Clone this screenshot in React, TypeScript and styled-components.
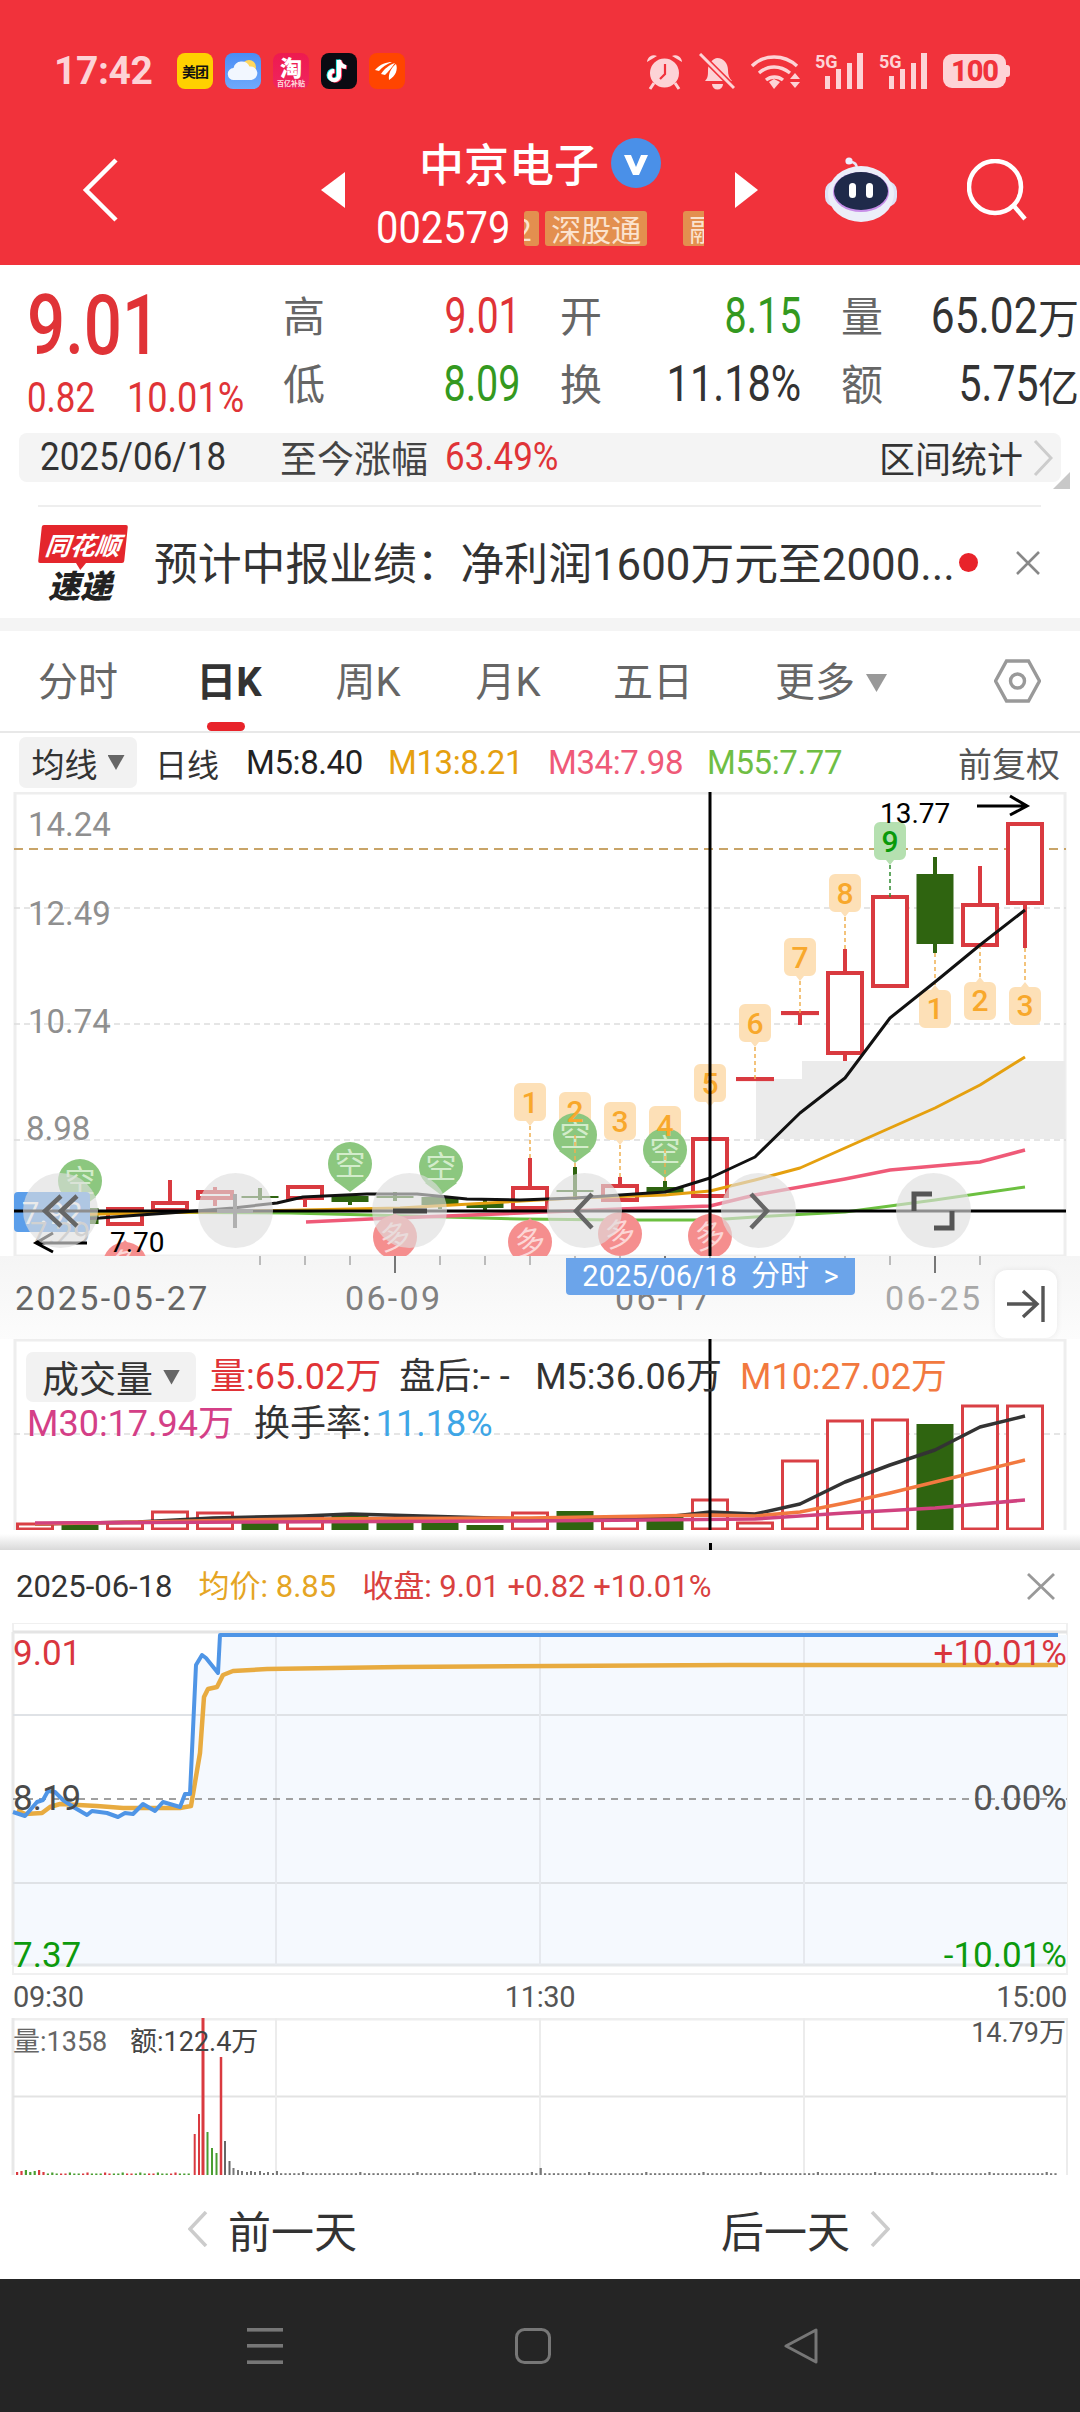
import React from 'react';
import styled, { createGlobalStyle } from 'styled-components';

const SANS = `Roboto, "Noto Sans CJK SC", sans-serif`;
const RED = '#e03337';
const GREEN = '#34991f';
const CANDLE_RED = '#d93a40';
const CANDLE_GREEN = '#2f6410';

const Global = createGlobalStyle`
  html, body { margin: 0; padding: 0; background: #fff; }
  body { font-family: ${SANS}; }
  * { box-sizing: border-box; }
`;

const Page = styled.div`
  width: 1080px; height: 2412px; overflow: hidden; background: #fff;
  display: flex; flex-direction: column; color: #333;
`;

/* The screenshot's numerals are a narrow DIN cut; no such family is installed. */
const Cond = styled.span<{ $x: number; $o?: string }>`
  display: inline-block; white-space: nowrap; transform: scaleX(${p => p.$x}); transform-origin: ${p => p.$o ?? 'left'} center;
`;

/* ---------- red head ---------- */
const RedHead = styled.header`
  height: 265px; background: #f1323b; flex: none; padding-top: 52px;
`;
const StatusRow = styled.div`
  height: 38px; padding-left: 54px; display: flex; align-items: center;
`;
const Clock = styled.span`
  font: 700 39px/38px Roboto, sans-serif; color: #fdd3d6; width: 123px; letter-spacing: -0.4px;
`;
const AppIcons = styled.div`display: flex; gap: 12px;`;
const AppIcon = styled.div<{ $bg: string }>`
  width: 36px; height: 36px; border-radius: 8px; background: ${p => p.$bg}; overflow: hidden;
  display: flex; align-items: center; justify-content: center; flex-direction: column;
`;
const MeituanText = styled.span`
  font: 700 14px/14px "Noto Sans CJK SC", sans-serif; color: #111; white-space: nowrap; letter-spacing: -1px;
`;
const TaoMain = styled.span`
  font: 900 22px/25px "Noto Sans CJK SC", sans-serif; color: #fff;
`;
const TaoSub = styled.span`
  font: 700 7px/9px "Noto Sans CJK SC", sans-serif; color: #ffe0e0; white-space: nowrap;
`;
const StatusIcons = styled.div`
  margin-left: auto; padding-right: 74px; display: flex; align-items: center;
`;
const StatusSvg = styled.svg<{ $ml: number }>`margin-left: ${p => p.$ml}px; display: block;`;
const Battery = styled.div`
  margin-left: 16px; width: 63px; height: 34px; border-radius: 9px; background: #fdd3d6;
  color: #f1323b; font: 800 29px/34px Roboto, sans-serif; text-align: center; position: relative; letter-spacing: -1px;
  &::after { content: ''; position: absolute; right: -4px; top: 11px; width: 4px; height: 12px; background: #fdd3d6; border-radius: 0 3px 3px 0; }
`;
const NavRow = styled.div`
  height: 110px; margin-top: 45px; padding-left: 82px;
  display: grid; grid-template-columns: 239px 24px 390px 90px 142px 58px; align-items: center;
`;
const IconSlot = styled.svg`display: block;`;
const TitleBlock = styled.div`
  height: 110px; display: flex; flex-direction: column; align-items: center; padding-top: 3px;
`;
const TitleLine = styled.div`display: flex; align-items: center; gap: 12px; height: 50px;`;
const TitleText = styled.h1`
  margin: 0; font: 500 45px/50px "Noto Sans CJK SC", sans-serif; color: #fff;
`;
const CodeLine = styled.div`display: flex; align-items: center; gap: 14px; margin-top: 22px; height: 36px;`;
const CodeText = styled(Cond)`
  font: 400 44px/36px Roboto, sans-serif; color: #fff; margin-right: -14px;
`;
const TagStrip = styled.div`
  width: 180px; height: 35px; overflow: hidden; display: flex;
`;
const Tag = styled.span<{ $w: number; $ml?: number; $sliver?: boolean }>`
  flex: none; width: ${p => p.$w}px; margin-left: ${p => p.$ml ?? 0}px; height: 35px; background: #e38f4f; border-radius: 3px;
  color: #fbe3cf; font: 400 30px/35px "Noto Sans CJK SC", sans-serif; white-space: nowrap; overflow: hidden;
  padding: 0 ${p => (p.$sliver ? 0 : 6)}px; text-indent: ${p => (p.$sliver ? -9 : 0)}px;
`;

/* ---------- quote ---------- */
const Quote = styled.section`
  height: 168px; flex: none; display: flex; padding-left: 27px;
`;
const QuoteMain = styled.div`width: 256px; padding-top: 21px;`;
const BigPrice = styled.div`
  font: 500 84px/80px Roboto, sans-serif; color: ${RED};
`;
const Delta = styled.div`
  margin-top: 10px; display: grid; grid-template-columns: 100px auto; font: 400 42px/44px Roboto, sans-serif; color: ${RED};
`;
const StatGrid = styled.div`
  padding-top: 17px; display: grid; grid-template-columns: 237px 241px 238px; grid-auto-rows: 68px; column-gap: 40px;
`;
const Stat = styled.div`display: flex; justify-content: space-between; align-items: center;`;
const StatLabel = styled.span`font: 400 42px/50px "Noto Sans CJK SC", sans-serif; color: #666; margin-bottom: 4px;`;
const StatValue = styled.span<{ $c: string }>`
  display: flex; align-items: center; font: 400 50px/50px Roboto, sans-serif; color: ${p => p.$c}; white-space: nowrap;
`;
const Unit = styled.span`font: 400 41px/50px "Noto Sans CJK SC", sans-serif;`;

const RangeBar = styled.div`
  flex: none; position: relative; margin-left: 19px; width: 1042px; height: 49px; border-radius: 8px; background: #f4f4f4;
  display: grid; grid-template-columns: 240px 165px 1fr auto auto; align-items: center; padding: 0 8px 0 21px;
  &::after { content: ''; position: absolute; right: -9px; bottom: -7px; width: 17px; height: 17px; background: #c8c8c8; clip-path: polygon(100% 0, 100% 100%, 0 100%); }
`;
const RangeNum = styled.span<{ $c: string }>`font: 400 38px/49px Roboto, sans-serif; color: ${p => p.$c};`;
const RangeLabel = styled.span`font: 400 37px/49px "Noto Sans CJK SC", sans-serif; color: #444;`;
const RangeAction = styled.span`font: 400 36px/49px "Noto Sans CJK SC", sans-serif; color: #333; margin-right: 10px;`;

const NewsRow = styled.div`
  flex: none; height: 113px; margin: 23px 39px 0 38px; border-top: 2px solid #eee; display: flex; align-items: center; position: relative;
`;
const Logo = styled.div`width: 89px; display: flex; flex-direction: column; align-items: center; flex: none;`;
const LogoTop = styled.div`
  width: 86px; height: 38px; background: #e4262c; transform: skewX(-6deg); border-radius: 2px; position: relative;
  color: #fff; font: italic 700 25px/38px "Noto Sans CJK SC", sans-serif; text-align: center; white-space: nowrap;
  &::after { content: ''; position: absolute; left: 38px; bottom: -7px; border: 5px solid transparent; border-top: 7px solid #e4262c; border-bottom: 0; }
`;
const LogoBottom = styled.div`
  margin: 5px 0 0 -5px; font: italic 900 32px/32px "Noto Sans CJK SC", sans-serif; color: #222; white-space: nowrap;
`;
const NewsText = styled.div`
  margin: 4px 0 0 27px; font: 400 43.8px/60px ${SANS}; color: #333; white-space: nowrap; width: 807px; overflow: hidden; flex: none;
`;
const RedDot = styled.i`width: 19px; height: 19px; border-radius: 50%; background: #e8232a; flex: none; margin-left: -2px;`;
const NewsClose = styled.svg`margin-left: 38px; flex: none;`;
const Band = styled.div`height: 13px; flex: none; background: #f4f4f4;`;

/* ---------- tabs ---------- */
const TabBar = styled.nav`
  flex: none; height: 102px; border-bottom: 2px solid #e8e8e8; display: grid; padding-bottom: 2px;
  grid-template-columns: 156px 146px 132px 148px 142px 180px 1fr; align-items: center;
`;
const Tab = styled.div<{ $active?: boolean }>`
  position: relative; height: 100px; padding-top: 4px; display: flex; align-items: center; justify-content: center;
  font: ${p => (p.$active ? 700 : 400)} 40px/50px ${SANS}; color: ${p => (p.$active ? '#333' : '#666')};
  ${p => p.$active && `&::after { content: ''; position: absolute; left: 51px; bottom: 0; width: 38px; height: 9px; border-radius: 5px; background: #e8232a; }`}
`;
const MoreTab = styled(Tab)`justify-content: flex-start; padding-left: 51px;`;
const TabCaret = styled.i`
  margin-left: 11px; width: 21px; height: 18px; background: #999; clip-path: polygon(0 0, 100% 0, 50% 100%);
`;
const Hex = styled.svg`justify-self: end; margin-right: 39px;`;

const MaRow = styled.div`
  flex: none; height: 59px; padding: 0 20px 0 19px; display: grid; align-items: center;
  grid-template-columns: 136px 91px 142px 160px 159px 1fr auto;
`;
const Chip = styled.div<{ $w: number; $h: number }>`
  width: ${p => p.$w}px; height: ${p => p.$h}px; background: #f2f2f2; border-radius: 7px;
  display: flex; align-items: center; justify-content: center; gap: 10px;
`;
const ChipText = styled.span<{ $s: number; $c?: string }>`
  font: 400 ${p => p.$s}px/40px "Noto Sans CJK SC", sans-serif; color: ${p => p.$c ?? '#333'};
`;
const ChipCaret = styled.i`width: 17px; height: 15px; background: #666; clip-path: polygon(0 0, 100% 0, 50% 100%);`;
const MaItem = styled.span<{ $c: string }>`
  font: 400 33px/40px ${SANS}; color: ${p => p.$c}; white-space: nowrap; letter-spacing: -.4px;
`;

/* ---------- charts ---------- */
const ChartWrap = styled.div`position: relative; flex: none; width: 1080px;`;
const ChartSvg = styled.svg`display: block;`;
const Axis = styled.text<{ $c?: string; $s?: number; $w?: number }>`
  font-family: ${SANS}; font-size: ${p => p.$s ?? 33}px; fill: ${p => p.$c ?? '#8f8f8f'}; font-weight: ${p => p.$w ?? 400};
`;
const MarkerGlyph = styled.text<{ $c: string; $s: number }>`
  font-family: "Noto Sans CJK SC", sans-serif; font-size: ${p => p.$s}px; fill: ${p => p.$c}; text-anchor: middle;
`;
const NavOverlay = styled.div`
  position: absolute; left: 23px; top: 381px; display: flex; gap: 99.5px;
`;
const NavBtn = styled.div`
  width: 75px; height: 75px; border-radius: 50%; background: rgba(222,222,222,.64);
  display: flex; align-items: center; justify-content: center;
`;

const DateAxis = styled.div`
  flex: none; height: 83px; position: relative; background: linear-gradient(#f5f5f5, #fcfcfc);
`;
const TickSvg = styled.svg`display: block;`;
const DateRow = styled.div`
  padding-left: 15px; display: grid; grid-template-columns: 330px 270px 270px 1fr; margin-top: 5px;
`;
const DateLabel = styled.span<{ $c: string }>`
  font: 400 34px/40px ${SANS}; letter-spacing: 2.3px; color: ${p => p.$c}; white-space: nowrap;
`;
const DateFlag = styled.div`
  position: absolute; left: 566px; top: 2px; width: 289px; height: 37px; background: #6ba4ea; border-radius: 0 0 4px 4px;
  color: #fff; font: 400 29px/37px ${SANS}; text-align: center; white-space: pre;
`;
const JumpEnd = styled.div`
  position: absolute; left: 995px; top: 14px; width: 62px; height: 68px; background: #fff; border-radius: 12px;
  box-shadow: 0 0 6px rgba(0,0,0,.08); display: flex; align-items: center; justify-content: center;
`;

const VolLegend = styled.div`
  position: absolute; left: 26px; top: 13px; width: 1040px;
`;
const VolLine = styled.div<{ $h: number }>`
  display: flex; align-items: center; height: ${p => p.$h}px; white-space: nowrap;
`;
const VolItem = styled.span<{ $c: string; $ml?: number; $w?: number }>`
  font: 400 36px/44px ${SANS}; color: ${p => p.$c}; margin-left: ${p => p.$ml ?? 0}px;
  ${p => p.$w && `width: ${p.$w}px;`}
`;
const WideDash = styled.span`letter-spacing: 10px;`;

const Shade = styled.div`
  flex: none; height: 20px; position: relative; background: linear-gradient(#fff 20%, #ececec 60%, #d9d9d9 100%);
  &::after { content: ''; position: absolute; left: 709px; top: 13px; width: 3px; height: 7px; background: #000; }
`;

/* ---------- sheet ---------- */
const SheetHead = styled.div`
  flex: none; height: 73px; padding: 0 25px 0 16px; display: flex; align-items: center; white-space: nowrap;
`;
const SheetText = styled.span<{ $c: string; $ml?: number }>`
  font: 400 31px/40px ${SANS}; color: ${p => p.$c}; margin-left: ${p => p.$ml ?? 0}px;
`;
const SheetClose = styled.svg`margin-left: auto;`;
const TimeAxis = styled.div`
  flex: none; height: 43px; padding: 0 13px; display: flex; justify-content: space-between; align-items: center;
  font: 400 29px/36px ${SANS}; color: #555; letter-spacing: -.3px;
`;
const Footer = styled.div`flex: none; height: 99px; display: flex; padding: 0 8px 2px 6px;`;
const FootBtn = styled.div`
  flex: 1; display: flex; align-items: center; justify-content: center; gap: 20px;
  font: 400 43px/50px "Noto Sans CJK SC", sans-serif; color: #333;
`;
const SysBar = styled.footer`
  flex: 1; background: #252525; display: flex; align-items: center; padding-left: 247px; gap: 232px;
`;

/* ---------- data ---------- */
const cx = (i: number) => 35 + 45 * i;
type Candle = { t: number; b: number; wt?: number; wb?: number; g?: boolean };
const candles: Candle[] = [
  { t: 1209, b: 1215, g: false }, { t: 1208, b: 1224, g: true }, { t: 1209, b: 1224, wt: 1207 }, { t: 1203, b: 1210, wt: 1180 },
  { t: 1192, b: 1198, wt: 1187, wb: 1206 }, { t: 1196, b: 1198, wt: 1188, wb: 1200, g: true }, { t: 1187, b: 1198, wb: 1207 },
  { t: 1196, b: 1202, wb: 1205, g: true }, { t: 1196, b: 1198, wt: 1192, wb: 1201, g: true }, { t: 1197, b: 1205, wb: 1209, g: true },
  { t: 1203, b: 1208, wt: 1200, wb: 1211, g: true }, { t: 1188, b: 1208, wt: 1158 }, { t: 1190, b: 1192, wt: 1167, wb: 1200, g: true },
  { t: 1186, b: 1200, wt: 1177 }, { t: 1187, b: 1193, wt: 1181, g: true }, { t: 1139, b: 1196 }, { t: 1079, b: 1079.1 },
  { t: 1013, b: 1013.1, wb: 1025 }, { t: 973, b: 1053, wt: 949, wb: 1061 }, { t: 897, b: 986 }, { t: 874, b: 944, wt: 857, wb: 953, g: true },
  { t: 905, b: 945, wt: 866 }, { t: 824, b: 903, wb: 948 },
];
const pts = (a: number[][]) => a.map(p => p.join(',')).join(' ');
const ma5 = [[40,1221],[100,1218],[140,1215],[183,1212],[233,1208],[277,1203],[303,1197],[367,1194],[417,1194],[467,1199],[520,1200],[575,1198],[620,1195],[665,1192],[710,1178],[755,1157],[800,1113],[845,1078],[890,1018],[935,982],[980,945],[1025,910]];
const ma13 = [[40,1216],[100,1214],[250,1211],[400,1208],[575,1198],[665,1195],[710,1191],[755,1180],[800,1168],[845,1148],[890,1128],[935,1108],[980,1085],[1025,1057]];
const ma34 = [[306,1222],[370,1219],[520,1213],[620,1209],[710,1206],[755,1195],[845,1179],[890,1170],[980,1162],[1025,1150]];
const ma55 = [[60,1212],[290,1213],[370,1215],[520,1219],[620,1220],[710,1220],[755,1217],[845,1212],[935,1200],[1025,1187]];

const topTags: [number, number, string, boolean?][] = [
  [11, 1083, '1'], [12, 1092, '2'], [13, 1102, '3'], [14, 1106, '4'], [15, 1064, '5'], [16, 1004, '6'], [17, 938, '7'], [18, 874, '8'], [19, 822, '9', true],
];
const topTagEnds = [1158, 1167, 1177, 1181, 1139, 1079, 1013, 949, 897];
const bottomTags: [number, number, string, number][] = [
  [20, 985, '1', 953], [21, 977, '2', 945], [22, 982, '3', 948],
];
const kong: [number, number][] = [[80, 1159], [350, 1142], [441, 1145], [575, 1113], [665, 1128]];
const duo: [number, number][] = [[125, 1240], [395, 1213], [530, 1218], [620, 1210], [710, 1212]];

const volBars: [number, boolean][] = [
  [1524, false], [1525, true], [1523, false], [1512, false], [1513, false], [1521, true], [1517, false], [1516, true], [1517, true], [1518, true], [1525, true],
  [1513, false], [1511, true], [1519, false], [1517, true], [1500, false], [1523, false], [1461, false], [1421, false], [1420, false], [1424, true], [1406, false], [1406, false],
];
const volBlack = [[35,1524],[138,1522],[213,1518],[303,1516],[351,1514],[530,1519],[665,1517],[710,1512],[755,1514],[800,1504],[845,1482],[890,1465],[935,1450],[980,1427],[1025,1416]];
const volOrange = [[35,1524],[300,1519],[530,1518],[710,1515],[755,1516],[800,1512],[845,1503],[890,1493],[935,1482],[1025,1460]];
const volPink = [[35,1523],[530,1521],[755,1519],[845,1513],[935,1508],[1025,1500]];

const blueLine = [[13,1812],[25,1816],[37,1802],[43,1800],[48,1791],[55,1792],[63,1800],[75,1808],[87,1815],[92,1811],[107,1813],[118,1817],[125,1813],[133,1814],[143,1804],[155,1811],[163,1802],[180,1807],[185,1794],[190,1794],[196,1665],[202,1655],[206,1658],[218,1673],[220,1635],[1058,1635]];
const avgLine = [[17,1810],[25,1814],[42,1813],[50,1807],[60,1804],[97,1806],[123,1808],[180,1808],[191,1806],[200,1753],[204,1697],[208,1689],[217,1687],[223,1675],[233,1671],[267,1669],[400,1667],[730,1665],[1058,1665]];

const specials: [number, number, string, number][] = [
  [194.7, 2134, '#d93a40', 2], [199, 2114, '#d93a40', 2], [203, 2018, '#d93a40', 3], [207.5, 2132, '#4a9e32', 2], [212, 2148, '#4a9e32', 2], [216.5, 2153, '#4a9e32', 2],
  [221, 2057, '#d93a40', 2.5], [225, 2141, '#666', 2], [229.5, 2161, '#666', 2], [233.5, 2168, '#777', 2], [238, 2170, '#777', 2], [242, 2171, '#777', 2], [247, 2172, '#777', 2],
  [251, 2171, '#777', 2], [255, 2172, '#777', 2], [260, 2171, '#777', 2], [264, 2173, '#777', 2], [268, 2172, '#777', 2], [273, 2173, '#777', 2], [277, 2171, '#777', 2],
];
const smallBars = Array.from({ length: 237 }, (_, i) => {
  const x = 16 + 4.4 * i;
  if (x > 191 && x < 279) return null;
  const early = x <= 191;
  const h = early ? (i < 7 ? 3 + (i % 3) : 1.5 + (i % 4 === 0 ? 1 : 0)) : (Math.abs(x - 541) < 2 ? 7 : i % 13 === 0 ? 3 : 1.8);
  const c = early ? (i % 5 < 2 ? '#d93a40' : '#4a9e32') : '#777';
  return <rect key={i} x={x} y={2175 - h} width={2.2} height={h} fill={c} />;
});

function PriceChart() {
  return (
    <ChartSvg width={1080} height={464} viewBox="0 792 1080 464">
      <rect x={15} y={793} width={1050} height={463} fill="#fff" stroke="#eee" strokeWidth={3} />
      <path d="M756 1139V1079H802V1061H1065V1139Z" fill="#ebebeb" />
      <line x1={14} x2={1066} y1={849} y2={849} stroke="#c8a468" strokeWidth={2} strokeDasharray="9 6" />
      {[908, 1024, 1140].map(y => (
        <line key={y} x1={14} x2={1066} y1={y} y2={y} stroke="#ddd" strokeWidth={1.5} strokeDasharray="6 4" />
      ))}
      <Axis x={28} y={836}>14.24</Axis>
      <Axis x={28} y={925}>12.49</Axis>
      <Axis x={28} y={1033}>10.74</Axis>
      <Axis x={26} y={1140}>8.98</Axis>

      {candles.map((c, i) => {
        const x = cx(i);
        const col = c.g ? CANDLE_GREEN : CANDLE_RED;
        return (
          <g key={i}>
            {c.wt !== undefined && <line x1={x} x2={x} y1={c.wt} y2={c.t} stroke={col} strokeWidth={4} />}
            {c.wb !== undefined && <line x1={x} x2={x} y1={c.b} y2={c.wb} stroke={col} strokeWidth={4} />}
            {c.g
              ? <rect x={x - 18.5} y={c.t} width={37} height={c.b - c.t} fill={col} />
              : <rect x={x - 17} y={c.t} width={34} height={c.b - c.t} fill="#fff" stroke={col} strokeWidth={4} />}
          </g>
        );
      })}

      {topTags.map(([i, y, , g]) => (
        <path key={i} fill={g ? '#b5e0b0' : '#fde0b7'}
          d={`M${cx(i) - 10} ${y}h20a6 6 0 0 1 6 6v26a6 6 0 0 1-6 6h-6l-4 5-4-5h-6a6 6 0 0 1-6-6v-26a6 6 0 0 1 6-6z`} />
      ))}
      {bottomTags.map(([i, y]) => (
        <path key={i} fill="#fde0b7"
          d={`M${cx(i) - 10} ${y + 5}h6l4-5 4 5h6a6 6 0 0 1 6 6v26a6 6 0 0 1-6 6h-20a6 6 0 0 1-6-6v-26a6 6 0 0 1 6-6z`} />
      ))}
      {kong.map(([x, y]) => (
        <g key={x}>
          <path d={`M${x - 16} ${y + 38}L${x} ${y + 50}L${x + 16} ${y + 38}Z`} fill="#8cc77f" />
          <circle cx={x} cy={y + 22} r={22} fill="#8cc77f" />
          <MarkerGlyph x={x} y={y + 33} $c="#d3eccb" $s={31}>空</MarkerGlyph>
        </g>
      ))}
      {topTags.map(([i, y, d, g], n) => (
        <g key={i}>
          <line x1={cx(i)} x2={cx(i)} y1={y + 43} y2={topTagEnds[n]} stroke={g ? '#2f8a2f' : '#f0b050'} strokeWidth={1.5} strokeDasharray="4 3" />
          <Axis x={cx(i)} y={y + 30} textAnchor="middle" $s={30} $w={500} $c={g ? '#0a9a0a' : '#f8a82c'}>{d}</Axis>
        </g>
      ))}
      {bottomTags.map(([i, y, d, from]) => (
        <g key={i}>
          <line x1={cx(i)} x2={cx(i)} y1={from} y2={y} stroke="#f0b050" strokeWidth={1.5} strokeDasharray="4 3" />
          <Axis x={cx(i)} y={y + 34} textAnchor="middle" $s={30} $w={500} $c="#f8a82c">{d}</Axis>
        </g>
      ))}

      <polyline points={pts(ma55)} fill="none" stroke="#6cc040" strokeWidth={3} />
      <polyline points={pts(ma34)} fill="none" stroke="#ef5a78" strokeWidth={3.5} />
      <polyline points={pts(ma13)} fill="none" stroke="#e5a00f" strokeWidth={3} strokeLinejoin="round" />
      <polyline points={pts(ma5)} fill="none" stroke="#111" strokeWidth={3} strokeLinejoin="round" />

      <g>
        {duo.map(([x, y]) => (
          <g key={x}>
            <path d={`M${x - 12} ${y + 12}L${x} ${y}L${x + 12} ${y + 12}Z`} fill="#f58e8e" />
            <circle cx={x} cy={y + 24} r={22} fill="#f58e8e" />
            <MarkerGlyph x={x} y={y + 35} $c="#fcd6d6" $s={31} transform={`rotate(-12 ${x} ${y + 24})`}>多</MarkerGlyph>
          </g>
        ))}
      </g>
      <rect x={0} y={1256} width={1080} height={2} fill="#f5f5f5" />

      <rect x={14} y={1192} width={76} height={40} rx={4} fill="#5b9eea" />
      <Axis x={22} y={1224} $s={31} $c="#fff">7.92</Axis>
      <Axis x={30} y={1244} $s={31} $c="#bbb">7.29</Axis>

      <line x1={14} x2={1066} y1={1211} y2={1211} stroke="#000" strokeWidth={3} />
      <line x1={710} x2={710} y1={792} y2={1256} stroke="#000" strokeWidth={3} />

      <path d="M87 1243H36M53 1233L36 1243L53 1252" fill="none" stroke="#000" strokeWidth={3} />
      <Axis x={110} y={1252} $s={28} $c="#000">7.70</Axis>
      <Axis x={880} y={823} $s={28} $c="#000">13.77</Axis>
      <path d="M977 806H1027M1010 796L1027 806L1010 815" fill="none" stroke="#000" strokeWidth={3} />
    </ChartSvg>
  );
}

function ChartButtons() {
  const s = { fill: 'none', strokeLinecap: 'butt' as const };
  return (
    <NavOverlay>
      <NavBtn><svg width={44} height={36} viewBox="0 0 44 36"><path d="M22 3L6 18L22 33M38 3L22 18L38 33" {...s} stroke="#666" strokeWidth={4.5} /></svg></NavBtn>
      <NavBtn><svg width={40} height={36} viewBox="0 0 40 36"><path d="M20 1V35M2 18H38" {...s} stroke="#b0b0b0" strokeWidth={4} /></svg></NavBtn>
      <NavBtn><svg width={40} height={8} viewBox="0 0 40 8"><path d="M3 4H37" {...s} stroke="#444" strokeWidth={5} /></svg></NavBtn>
      <NavBtn><svg width={24} height={40} viewBox="0 0 24 40"><path d="M20 3L4 20L20 37" {...s} stroke="#666" strokeWidth={4.5} /></svg></NavBtn>
      <NavBtn><svg width={24} height={40} viewBox="0 0 24 40"><path d="M4 3L20 20L4 37" {...s} stroke="#666" strokeWidth={4.5} /></svg></NavBtn>
      <NavBtn><svg width={44} height={40} viewBox="0 0 44 40"><path d="M3 20V3H21M41 20V37H23" {...s} stroke="#555" strokeWidth={5} /></svg></NavBtn>
    </NavOverlay>
  );
}

function VolumeChart() {
  return (
    <ChartSvg width={1080} height={191} viewBox="0 1339 1080 191">
      <rect x={15} y={1340} width={1050} height={195} fill="#fff" stroke="#eee" strokeWidth={3} />
      <line x1={14} x2={1066} y1={1434} y2={1434} stroke="#ddd" strokeWidth={1.5} strokeDasharray="6 4" />
      {volBars.map(([t, g], i) => (g
        ? <rect key={i} x={cx(i) - 18.5} y={t} width={37} height={1530 - t} fill={CANDLE_GREEN} />
        : <rect key={i} x={cx(i) - 17.5} y={t} width={35} height={1529 - t} fill="#fff" stroke="#d94045" strokeWidth={3} />
      ))}
      <polyline points={pts(volBlack)} fill="none" stroke="#333" strokeWidth={3.5} strokeLinejoin="round" />
      <polyline points={pts(volOrange)} fill="none" stroke="#f2793f" strokeWidth={3.5} strokeLinejoin="round" />
      <polyline points={pts(volPink)} fill="none" stroke="#d0427f" strokeWidth={3.5} strokeLinejoin="round" />
      <line x1={710} x2={710} y1={1339} y2={1530} stroke="#000" strokeWidth={3} />
    </ChartSvg>
  );
}

function TimeChart() {
  const fill = `${pts(blueLine)} 1058,1965 13,1965`;
  return (
    <ChartSvg width={1080} height={352} viewBox="0 1623 1080 352">
      <rect x={13} y={1623} width={1054} height={351} fill="#fff" stroke="#f0f0f0" strokeWidth={2} />
      <polygon points={`${fill}`} fill="#f5f9fe" />
      <rect x={1058} y={1635} width={9} height={330} fill="#f5f9fe" />
      <line x1={13} x2={1067} y1={1632} y2={1632} stroke="#e4e4e4" strokeWidth={3} />
      <line x1={13} x2={1067} y1={1965} y2={1965} stroke="#e4e7ea" strokeWidth={3} />
      <line x1={13} x2={13} y1={1632} y2={1965} stroke="#e8e8e8" strokeWidth={3} />
      {[1715, 1883].map(y => <line key={y} x1={13} x2={1067} y1={y} y2={y} stroke="#dfe2e6" strokeWidth={2} />)}
      {[276, 540, 804].map(x => <line key={x} x1={x} x2={x} y1={1632} y2={1965} stroke="#e6e9ee" strokeWidth={2} />)}
      <line x1={13} x2={1067} y1={1799} y2={1799} stroke="#a0a0a0" strokeWidth={2} strokeDasharray="7 6" />
      <polyline points={pts(avgLine)} fill="none" stroke="#e8ab40" strokeWidth={4.5} strokeLinejoin="round" />
      <polyline points={pts(blueLine)} fill="none" stroke="#4f95e6" strokeWidth={4} strokeLinejoin="round" />
      <Axis x={13} y={1665} $s={35} $c="#d9363e">9.01</Axis>
      <Axis x={1067} y={1665} $s={35} $c="#d9363e" textAnchor="end">+10.01%</Axis>
      <Axis x={13} y={1810} $s={35} $c="#4a4a4a">8.19</Axis>
      <Axis x={1067} y={1810} $s={35} $c="#555" textAnchor="end">0.00%</Axis>
      <Axis x={13} y={1967} $s={35} $c="#0d9a0d">7.37</Axis>
      <Axis x={1067} y={1967} $s={35} $c="#0d9a0d" textAnchor="end">-10.01%</Axis>
    </ChartSvg>
  );
}

function MinuteVolume() {
  return (
    <ChartSvg width={1080} height={162} viewBox="0 2018 1080 162">
      <rect x={13} y={2019} width={1054} height={156} fill="#fff" />
      <line x1={13} x2={1067} y1={2019} y2={2019} stroke="#eee" strokeWidth={3} />
      <line x1={13} x2={13} y1={2018} y2={2175} stroke="#e8e8e8" strokeWidth={3} />
      <line x1={13} x2={1067} y1={2096.5} y2={2096.5} stroke="#e3e3e3" strokeWidth={2} />
      {[276, 540, 804, 1067].map(x => <line key={x} x1={x} x2={x} y1={2018} y2={2175} stroke="#ececec" strokeWidth={2} />)}
      {smallBars}
      {specials.map(([x, y, c, w]) => <rect key={x} x={x - w / 2} y={y} width={w} height={2175 - y} fill={c} />)}
      <Axis x={13} y={2051} $s={27} $c="#666">量:1358</Axis>
      <Axis x={130} y={2051} $s={27} $c="#444">额:122.4万</Axis>
      <Axis x={1066} y={2042} $s={27} $c="#555" textAnchor="end">14.79万</Axis>
    </ChartSvg>
  );
}

export default function App() {
  return (
    <Page>
      <Global />
      <RedHead>
        <StatusRow>
          <Clock>17:42</Clock>
          <AppIcons>
            <AppIcon $bg="#ffd100"><MeituanText>美团</MeituanText></AppIcon>
            <AppIcon $bg="linear-gradient(#4a8df5,#6fa9fb)">
              <svg width={36} height={36} viewBox="0 0 36 36">
                <circle cx={24} cy={14} r={7} fill="#ffd75e" />
                <path d="M9 27a6 6 0 0 1-.5-12 8.5 8.5 0 0 1 16-1.5 6.8 6.8 0 0 1 2 13.5z" fill="#f2f7ff" />
              </svg>
            </AppIcon>
            <AppIcon $bg="linear-gradient(#ee1a4f,#f0245f)"><TaoMain>淘</TaoMain><TaoSub>百亿补贴</TaoSub></AppIcon>
            <AppIcon $bg="#0a0a12">
              <svg width={30} height={30} viewBox="0 0 30 30" fill="none" strokeWidth={4.2}>
                <path d="M15 4v15.5a4.7 4.7 0 1 1-4.7-4.7M15 4c.5 4 3 6.5 7 7" stroke="#25f4ee" transform="translate(-1 -.5)" />
                <path d="M15 4v15.5a4.7 4.7 0 1 1-4.7-4.7M15 4c.5 4 3 6.5 7 7" stroke="#fe2c55" transform="translate(1 .5)" />
                <path d="M15 4v15.5a4.7 4.7 0 1 1-4.7-4.7M15 4c.5 4 3 6.5 7 7" stroke="#fff" />
              </svg>
            </AppIcon>
            <AppIcon $bg="#ff4500">
              <svg width={30} height={30} viewBox="0 0 30 30" fill="#fff">
                <path d="M3 14C8 8 15 6 20 6c-5 2-10 5-13 9z" />
                <path d="M9 18c3-5 8-9 14-11-3 4-7 9-10 12z" />
                <path d="M17 24c-1-6 2-12 7-16 2 5 0 12-7 16z" />
              </svg>
            </AppIcon>
          </AppIcons>
          <StatusIcons>
            <StatusSvg $ml={0} width={37} height={37} viewBox="0 0 37 37" fill="#fdd3d6">
              <circle cx={18.5} cy={20} r={14.5} />
              <path d="M1 9a7 7 0 0 1 10-6zM36 9a7 7 0 0 0-10-6z" />
              <path d="M8 30l-4 6M29 30l4 6" stroke="#fdd3d6" strokeWidth={3} />
              <path d="M19 11v10l-5 5" fill="none" stroke="#f1323b" strokeWidth={2.2} />
            </StatusSvg>
            <StatusSvg $ml={16} width={36} height={37} viewBox="0 0 36 37" fill="#fdd3d6">
              <path d="M6 28c3-3 3-6 3-11 0-6 4-11 9-12 7 0 11 6 11 12 0 5 1 8 4 11z" />
              <path d="M13 31h11a5 5 0 0 1-11 0z" />
              <path d="M1 1L35 35" stroke="#f1323b" strokeWidth={6} />
              <path d="M1 1L35 35" stroke="#fdd3d6" strokeWidth={3} />
            </StatusSvg>
            <StatusSvg $ml={15} width={51} height={37} viewBox="0 0 51 37" fill="none" stroke="#fdd3d6" strokeWidth={3.4}>
              <path d="M2 13C14 1 34 1 47 13M9 20c9-8 21-8 31 0M16 27c5-4 12-4 17 0" />
              <path d="M19 29l5-3 6 3-6 7z" fill="#fdd3d6" stroke="none" />
              <path d="M40 26l5-6 5 6zM40 29l5 6 5-6z" fill="#fdd3d6" stroke="none" />
            </StatusSvg>
            {[14, 16].map(ml => (
              <StatusSvg key={ml} $ml={ml} width={48} height={37} viewBox="0 0 48 37" fill="#fdd3d6">
                <Axis x={0} y={15} $s={18} $w={700} $c="#fdd3d6">5G</Axis>
                <rect x={10} y={23} width={5} height={13} />
                <rect x={21} y={16} width={5} height={20} />
                <rect x={32} y={10} width={5} height={26} />
                <rect x={42} y={0} width={6} height={36} />
              </StatusSvg>
            ))}
            <Battery>100</Battery>
          </StatusIcons>
        </StatusRow>
        <NavRow>
          <IconSlot width={37} height={66} viewBox="0 0 37 66" fill="none">
            <path d="M34 3L4 33L34 63" stroke="#fff" strokeWidth={4.5} />
          </IconSlot>
          <IconSlot width={24} height={36} viewBox="0 0 24 36"><path d="M24 0V36L0 18z" fill="#fff" /></IconSlot>
          <TitleBlock>
            <TitleLine>
              <TitleText>中京电子</TitleText>
              <svg width={50} height={50} viewBox="0 0 50 50">
                <circle cx={25} cy={25} r={25} fill="#4a90e8" />
                <path d="M13 17h7l5 12 5-12h7l-9 20h-6z" fill="#fff" />
              </svg>
            </TitleLine>
            <CodeLine>
              <CodeText $x={0.905}>002579</CodeText>
              <TagStrip>
                <Tag $w={15} $sliver>2</Tag>
                <Tag $w={102} $ml={6}>深股通</Tag>
                <Tag $w={40} $ml={36}>融资融券</Tag>
              </TagStrip>
            </CodeLine>
          </TitleBlock>
          <IconSlot width={23} height={36} viewBox="0 0 23 36"><path d="M0 0V36L23 18z" fill="#fff" /></IconSlot>
          <IconSlot width={72} height={66} viewBox="0 0 72 66">
            <path d="M32 12c0-5-3-7-7-7" fill="none" stroke="#e8e8f6" strokeWidth={2.5} />
            <circle cx={24} cy={4} r={3.6} fill="#eef" />
            <rect x={0} y={24} width={72} height={26} rx={10} fill="#dfe1f5" />
            <ellipse cx={36} cy={37} rx={33} ry={28} fill="#eceef9" />
            <ellipse cx={36} cy={35} rx={28} ry={20} fill="#c78ee8" />
            <ellipse cx={36} cy={34} rx={27} ry={19} fill="#1f2a4a" />
            <rect x={24} y={26} width={7} height={15} rx={3.5} fill="#fff" />
            <rect x={41} y={26} width={7} height={15} rx={3.5} fill="#fff" />
          </IconSlot>
          <IconSlot width={60} height={62} viewBox="0 0 60 62" fill="none" stroke="#fff" strokeWidth={4.5}>
            <circle cx={28} cy={28} r={26} />
            <path d="M47 47L58 60" />
          </IconSlot>
        </NavRow>
      </RedHead>

      <Quote>
        <QuoteMain>
          <BigPrice><Cond $x={0.8}>9.01</Cond></BigPrice>
          <Delta><Cond $x={0.83}>0.82</Cond><Cond $x={0.86}>10.01%</Cond></Delta>
        </QuoteMain>
        <StatGrid>
          <Stat><StatLabel>高</StatLabel><StatValue $c={RED}><Cond $x={0.78} $o="right">9.01</Cond></StatValue></Stat>
          <Stat><StatLabel>开</StatLabel><StatValue $c={GREEN}><Cond $x={0.79} $o="right">8.15</Cond></StatValue></Stat>
          <Stat><StatLabel>量</StatLabel><StatValue $c="#333"><Cond $x={0.85} $o="right">65.02</Cond><Unit>万</Unit></StatValue></Stat>
          <Stat><StatLabel>低</StatLabel><StatValue $c={GREEN}><Cond $x={0.79} $o="right">8.09</Cond></StatValue></Stat>
          <Stat><StatLabel>换</StatLabel><StatValue $c="#333"><Cond $x={0.83} $o="right">11.18%</Cond></StatValue></Stat>
          <Stat><StatLabel>额</StatLabel><StatValue $c="#333"><Cond $x={0.82} $o="right">5.75</Cond><Unit>亿</Unit></StatValue></Stat>
        </StatGrid>
      </Quote>
      <RangeBar>
        <RangeNum $c="#333"><Cond $x={0.92}>2025/06/18</Cond></RangeNum>
        <RangeLabel>至今涨幅</RangeLabel>
        <RangeNum $c={RED}><Cond $x={0.92}>63.49%</Cond></RangeNum>
        <RangeAction>区间统计</RangeAction>
        <svg width={20} height={36} viewBox="0 0 20 36" fill="none"><path d="M2 1L18 18L2 35" stroke="#ccc" strokeWidth={3} /></svg>
      </RangeBar>
      <NewsRow>
        <Logo>
          <LogoTop>同花顺</LogoTop>
          <LogoBottom>速递</LogoBottom>
        </Logo>
        <NewsText>预计中报业绩：净利润1600万元至2000...</NewsText>
        <RedDot />
        <NewsClose width={24} height={24} viewBox="0 0 24 24" fill="none"><path d="M1 1L23 23M23 1L1 23" stroke="#888" strokeWidth={2.6} /></NewsClose>
      </NewsRow>
      <Band />
      <TabBar>
        <Tab>分时</Tab>
        <Tab $active>日K</Tab>
        <Tab>周K</Tab>
        <Tab>月K</Tab>
        <Tab>五日</Tab>
        <MoreTab>更多<TabCaret /></MoreTab>
        <Hex width={47} height={44} viewBox="0 0 47 44" fill="none">
          <path d="M1.5 22L12.5 2H34.5L45.5 22L34.5 42H12.5Z" stroke="#999" strokeWidth={3.4} />
          <circle cx={23.5} cy={22} r={7} stroke="#999" strokeWidth={3.4} />
        </Hex>
      </TabBar>
      <MaRow>
        <Chip $w={118} $h={51}><ChipText $s={33}>均线</ChipText><ChipCaret /></Chip>
        <ChipText $s={32}>日线</ChipText>
        <MaItem $c="#222">M5:8.40</MaItem>
        <MaItem $c="#e5a00f">M13:8.21</MaItem>
        <MaItem $c="#ef5a78">M34:7.98</MaItem>
        <MaItem $c="#6fbe44">M55:7.77</MaItem>
        <ChipText $s={34} $c="#555">前复权</ChipText>
      </MaRow>
      <ChartWrap>
        <PriceChart />
        <ChartButtons />
      </ChartWrap>
      <DateAxis>
        <TickSvg width={1080} height={17} viewBox="0 1256 1080 17">
          {Array.from({ length: 17 }, (_, i) => 260 + 45 * i).map(x => (
            <line key={x} x1={x} x2={x} y1={1256} y2={(x === 395 || x === 665 || x === 935) ? 1273 : 1265} stroke={(x === 395 || x === 665 || x === 935) ? '#777' : '#bbb'} strokeWidth={2} />
          ))}
        </TickSvg>
        <DateRow>
          <DateLabel $c="#666">2025-05-27</DateLabel>
          <DateLabel $c="#808080">06-09</DateLabel>
          <DateLabel $c="#808080">06-17</DateLabel>
          <DateLabel $c="#a8a8a8">06-25</DateLabel>
        </DateRow>
        <DateFlag>{'2025/06/18  分时  >'}</DateFlag>
        <JumpEnd>
          <svg width={40} height={36} viewBox="0 0 40 36" fill="none" stroke="#555" strokeWidth={3.4}>
            <path d="M1 18H31M17 5L31 18L17 31M37 0V36" />
          </svg>
        </JumpEnd>
      </DateAxis>
      <ChartWrap>
        <VolumeChart />
        <VolLegend>
          <VolLine $h={50}>
            <Chip $w={170} $h={50}><ChipText $s={37}>成交量</ChipText><ChipCaret /></Chip>
            <VolItem $c={RED} $ml={14}>量:65.02万</VolItem>
            <VolItem $c="#333" $ml={18} $w={136}>盘后:<WideDash>--</WideDash></VolItem>
            <VolItem $c="#333">M5:36.06万</VolItem>
            <VolItem $c="#f2793f" $ml={18}>M10:27.02万</VolItem>
          </VolLine>
          <VolLine $h={44}>
            <VolItem $c="#d43f87" $ml={1}>M30:17.94万</VolItem>
            <VolItem $c="#333" $ml={20}>换手率:</VolItem>
            <VolItem $c="#3ea6e6" $ml={5}>11.18%</VolItem>
          </VolLine>
        </VolLegend>
      </ChartWrap>
      <Shade />
      <SheetHead>
        <SheetText $c="#333">2025-06-18</SheetText>
        <SheetText $c="#e5a524" $ml={26}>均价: 8.85</SheetText>
        <SheetText $c="#d9413f" $ml={26}>收盘: 9.01 +0.82 +10.01%</SheetText>
        <SheetClose width={28} height={27} viewBox="0 0 28 27" fill="none"><path d="M1 1L27 26M27 1L1 26" stroke="#999" strokeWidth={2.8} /></SheetClose>
      </SheetHead>
      <TimeChart />
      <TimeAxis><span>09:30</span><span>11:30</span><span>15:00</span></TimeAxis>
      <MinuteVolume />
      <Footer>
        <FootBtn>
          <svg width={20} height={36} viewBox="0 0 20 36" fill="none"><path d="M18 1L2 18L18 35" stroke="#ccc" strokeWidth={3.5} /></svg>
          前一天
        </FootBtn>
        <FootBtn>
          后一天
          <svg width={20} height={36} viewBox="0 0 20 36" fill="none"><path d="M2 1L18 18L2 35" stroke="#ccc" strokeWidth={3.5} /></svg>
        </FootBtn>
      </Footer>
      <SysBar>
        <svg width={36} height={36} viewBox="0 0 36 36" fill="#777">
          <rect y={0} width={36} height={3.6} /><rect y={16} width={36} height={3.6} /><rect y={32.4} width={36} height={3.6} />
        </svg>
        <svg width={36} height={36} viewBox="0 0 36 36" fill="none"><rect x={1.5} y={1.5} width={33} height={33} rx={8} stroke="#777" strokeWidth={3} /></svg>
        <svg width={36} height={36} viewBox="0 0 36 36" fill="none"><path d="M33 2V34L3 18Z" stroke="#777" strokeWidth={3} strokeLinejoin="round" /></svg>
      </SysBar>
    </Page>
  );
}
